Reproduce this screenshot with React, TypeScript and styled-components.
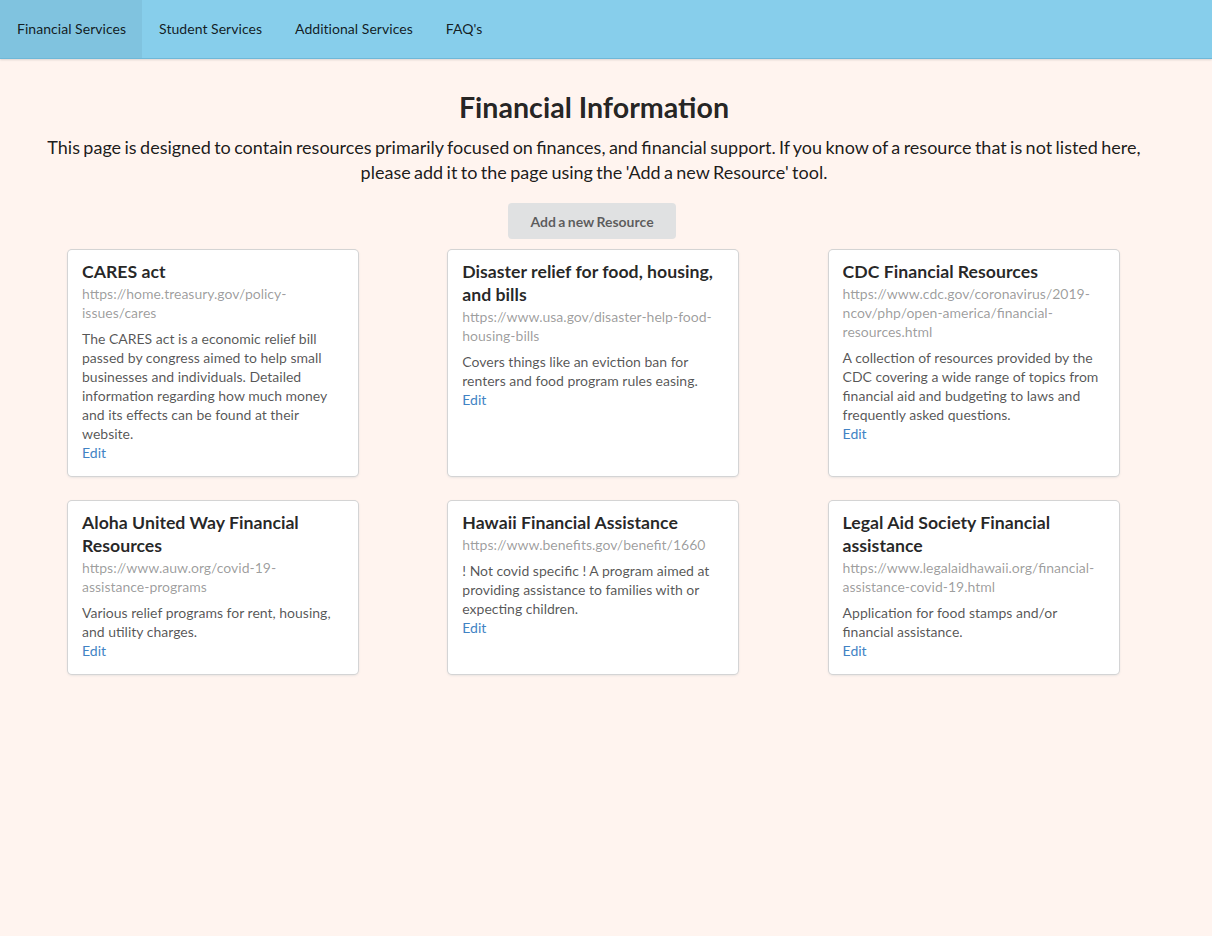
import React from "react";
import styled, { createGlobalStyle } from "styled-components";

const GlobalStyle = createGlobalStyle`
  html, body {
    margin: 0;
    padding: 0;
    background: #fff4ef;
    font-family: Lato, "Open Sans", "Liberation Sans", sans-serif;
    font-size: 14px;
    line-height: 1.4285em;
    color: rgba(0, 0, 0, 0.87);
  }
  #root {
    min-height: 936px;
    background: #fff4ef;
  }
  * { box-sizing: border-box; }
`;

const NavBar = styled.nav`
  display: flex;
  height: 59px;
  background: #87ceeb;
  border-bottom: 1px solid #6fb8d8;
  box-shadow: 0 1px 2px 0 rgba(34, 36, 38, 0.15);
`;

const NavItem = styled.a<{ $active?: boolean }>`
  display: flex;
  align-items: center;
  padding: 0 16px 0 17px;
  height: 58px;
  font-size: 14px;
  letter-spacing: 0.04px;
  color: rgba(0, 0, 0, 0.87);
  text-decoration: none;
  cursor: pointer;
  background: ${(p) => (p.$active ? "rgba(0, 0, 0, 0.05)" : "transparent")};
`;

const Main = styled.main`
  width: 1188px;
  display: flex;
  flex-direction: column;
  align-items: center;
  padding-top: 32px;
`;

const Title = styled.h1`
  margin: 0;
  font-size: 28.6px;
  font-weight: 700;
  line-height: 32px;
  color: rgba(0, 0, 0, 0.87);
`;

const Intro = styled.p`
  margin: 12px 0 0;
  text-align: center;
  font-size: 18px;
  line-height: 25px;
  word-spacing: -1.2px;
  white-space: nowrap;
  color: rgba(0, 0, 0, 0.9);
`;

const AddButton = styled.button`
  margin: 18px 4px 0 0;
  height: 36px;
  width: 168px;
  padding: 0;
  border: none;
  border-radius: 4px;
  background: #e0e1e2;
  color: rgba(0, 0, 0, 0.6);
  font-family: inherit;
  font-size: 14px;
  font-weight: 700;
  white-space: nowrap;
  word-spacing: -1px;
  cursor: pointer;
`;

const CardGrid = styled.div`
  align-self: stretch;
  display: grid;
  grid-template-columns: repeat(3, 290px);
  column-gap: 90.3px;
  row-gap: 25px;
  margin: 11px 0 0 68px;
  align-items: stretch;
`;

const Card = styled.div`
  background: #fff;
  border-radius: 4px;
  box-shadow: 0 1px 3px 0 #d4d4d5, 0 0 0 1px #d4d4d5;
  padding: 14px 14px 14px;
  display: flex;
  flex-direction: column;
`;

const CardHeader = styled.div`
  font-size: 17.7px;
  font-weight: 700;
  line-height: 23px;
  margin-top: -4px;
  color: rgba(0, 0, 0, 0.85);
`;

const CardMeta = styled.div`
  font-size: 14px;
  line-height: 19px;
  margin-top: 1px;
  color: rgba(0, 0, 0, 0.4);
  word-break: break-word;
`;

const CardDescription = styled.div`
  font-size: 14px;
  line-height: 19px;
  margin-top: 7px;
  color: rgba(0, 0, 0, 0.68);
`;

const EditLink = styled.a`
  font-size: 14px;
  line-height: 19px;
  color: #4183c4;
  text-decoration: none;
  cursor: pointer;
  align-self: flex-start;
`;

type Resource = {
  title: string;
  urlLines: string[];
  description: string;
};

const resources: Resource[] = [
  {
    title: "CARES act",
    urlLines: ["https://home.treasury.gov/policy-", "issues/cares"],
    description:
      "The CARES act is a economic relief bill passed by congress aimed to help small businesses and individuals. Detailed information regarding how much money and its effects can be found at their website.",
  },
  {
    title: "Disaster relief for food, housing, and bills",
    urlLines: ["https://www.usa.gov/disaster-help-food-", "housing-bills"],
    description:
      "Covers things like an eviction ban for renters and food program rules easing.",
  },
  {
    title: "CDC Financial Resources",
    urlLines: [
      "https://www.cdc.gov/coronavirus/2019-",
      "ncov/php/open-america/financial-",
      "resources.html",
    ],
    description:
      "A collection of resources provided by the CDC covering a wide range of topics from financial aid and budgeting to laws and frequently asked questions.",
  },
  {
    title: "Aloha United Way Financial Resources",
    urlLines: ["https://www.auw.org/covid-19-", "assistance-programs"],
    description: "Various relief programs for rent, housing, and utility charges.",
  },
  {
    title: "Hawaii Financial Assistance",
    urlLines: ["https://www.benefits.gov/benefit/1660"],
    description:
      "! Not covid specific ! A program aimed at providing assistance to families with or expecting children.",
  },
  {
    title: "Legal Aid Society Financial assistance",
    urlLines: ["https://www.legalaidhawaii.org/financial-", "assistance-covid-19.html"],
    description: "Application for food stamps and/or financial assistance.",
  },
];

const navItems = ["Financial Services", "Student Services", "Additional Services", "FAQ's"];

export default function App() {
  return (
    <>
      <GlobalStyle />
      <NavBar>
        {navItems.map((item, i) => (
          <NavItem key={item} $active={i === 0}>
            {item}
          </NavItem>
        ))}
      </NavBar>
      <Main>
        <Title>Financial Information</Title>
        <Intro>
          This page is designed to contain resources primarily focused on finances, and financial
          support. If you know of a resource that is not listed here,
          <br />
          please add it to the page using the 'Add a new Resource' tool.
        </Intro>
        <AddButton>Add a new Resource</AddButton>
        <CardGrid>
          {resources.map((r) => (
            <Card key={r.title}>
              <CardHeader>{r.title}</CardHeader>
              <CardMeta>
                {r.urlLines.map((l, i) => (
                  <React.Fragment key={i}>
                    {l}
                    {i < r.urlLines.length - 1 && <br />}
                  </React.Fragment>
                ))}
              </CardMeta>
              <CardDescription>{r.description}</CardDescription>
              <EditLink>Edit</EditLink>
            </Card>
          ))}
        </CardGrid>
      </Main>
    </>
  );
}
